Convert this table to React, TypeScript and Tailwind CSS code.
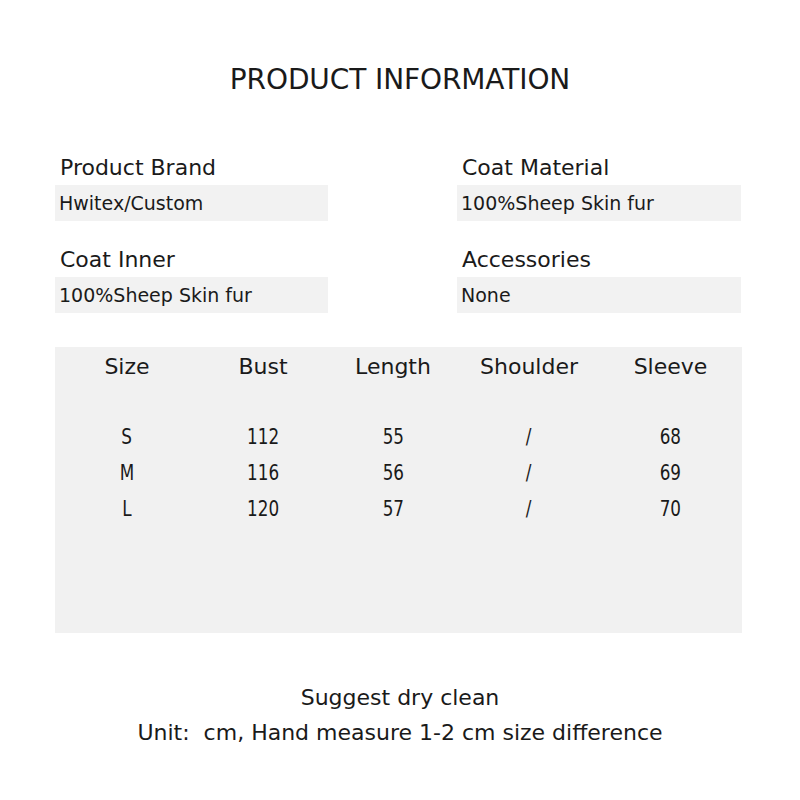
const specs = [
  [
    { label: "Product Brand", value: "Hwitex/Custom" },
    { label: "Coat Inner", value: "100%Sheep Skin fur" },
  ],
  [
    { label: "Coat Material", value: "100%Sheep Skin fur" },
    { label: "Accessories", value: "None" },
  ],
];

const cols = [
  { head: "Size", w: "w-[144px]" },
  { head: "Bust", w: "w-[128px]" },
  { head: "Length", w: "w-[132px]" },
  { head: "Shoulder", w: "w-[140px]" },
  { head: "Sleeve", w: "w-[143px]" },
];

const rows = [
  ["S", "112", "55", "/", "68"],
  ["M", "116", "56", "/", "69"],
  ["L", "120", "57", "/", "70"],
];

function Field({ label, value, width }: { label: string; value: string; width: string }) {
  return (
    <div className={width}>
      <div className="pl-[5px] text-[22px] leading-[30px] text-[#1a1a1a]">{label}</div>
      <div className="mt-[2px] flex h-[36px] items-center bg-[#f2f2f2] pl-[4px] text-[20px] text-[#1a1a1a]">
        <span className="inline-block origin-left scale-x-95">{value}</span>
      </div>
    </div>
  );
}

export default function App() {
  return (
    <div className="h-[800px] w-[800px] bg-white font-['DejaVu_Sans',sans-serif] text-[#1a1a1a]">
      <h1 className="pt-[61px] text-center text-[28px] leading-[38px] font-normal tracking-[-0.1px]">
        PRODUCT INFORMATION
      </h1>

      <div className="mt-[54px] flex pl-[55px]">
        <div className="flex w-[273px] flex-col gap-[24px]">
          {specs[0].map((s) => (
            <Field key={s.label} {...s} width="w-[273px]" />
          ))}
        </div>
        <div className="ml-[129px] flex w-[284px] flex-col gap-[24px]">
          {specs[1].map((s) => (
            <Field key={s.label} {...s} width="w-[284px]" />
          ))}
        </div>
      </div>

      <div className="mt-[34px] ml-[55px] h-[286px] w-[687px] bg-[#f1f1f1]">
        <div className="flex">
          {cols.map((c) => (
            <div key={c.head} className={`${c.w} text-center text-[22px] leading-[40px]`}>
              {c.head}
            </div>
          ))}
        </div>
        <div className="mt-[32px]">
          {rows.map((r) => (
            <div key={r[0]} className="flex">
              {r.map((cell, i) => (
                <div key={i} className={`${cols[i].w} text-center text-[21px] leading-[36px]`}>
                  <span className="inline-block scale-x-80">{cell}</span>
                </div>
              ))}
            </div>
          ))}
        </div>
      </div>

      <div className="mt-[47px] text-center text-[22px] leading-[35px]">
        <div>Suggest dry clean</div>
        <div>Unit:&nbsp;&nbsp;cm, Hand measure 1-2 cm size difference</div>
      </div>
    </div>
  );
}
